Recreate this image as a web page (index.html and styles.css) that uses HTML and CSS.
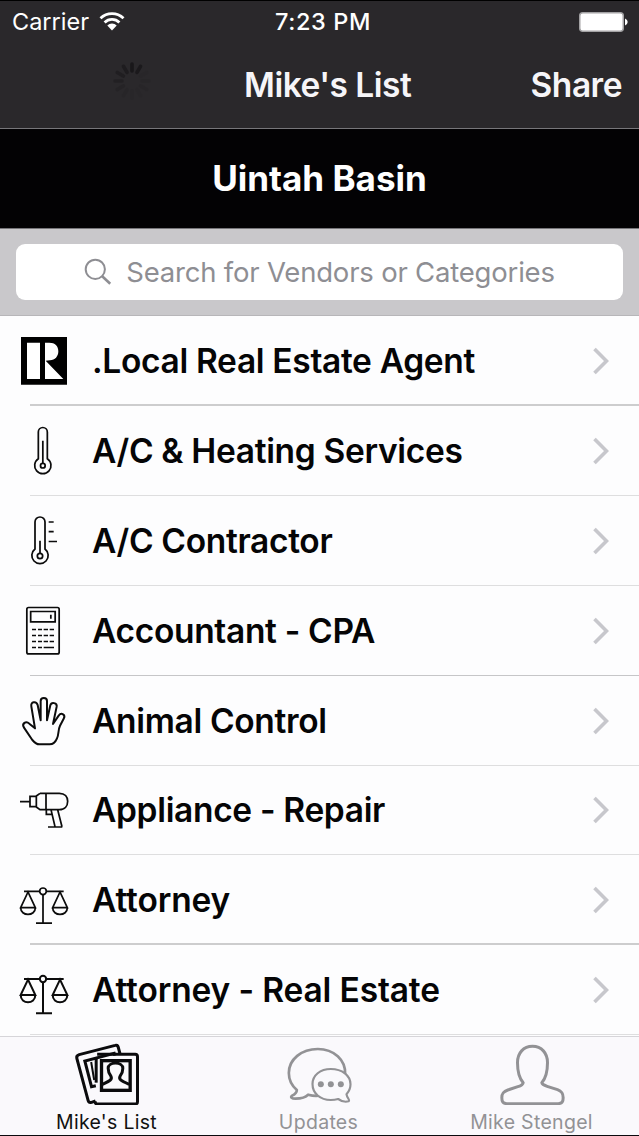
FILE: index.html
```html
<!DOCTYPE html>
<html lang="en">
<head>
    <meta charset="UTF-8">
    <meta name="viewport" content="width=device-width, initial-scale=1.0">
    <title>Mike's List</title>
    <link rel="stylesheet" href="styles.css">
</head>
<body>
    <div class="app">
        <header class="header">
            <div class="status-bar">
                <div class="carrier">
                    <span class="carrier-name">Carrier</span>
                    <svg class="wifi" viewBox="0 0 26 20">
                        <path d="M1.5 7.2a16.5 16.5 0 0 1 23 0M5.6 11.4a10.6 10.6 0 0 1 14.8 0" fill="none" stroke="#fff" stroke-width="2.8"/>
                        <path d="M8.3 14.4a6.8 6.8 0 0 1 9.4 0L13 19.4z" fill="#fff"/>
                    </svg>
                </div>
                <span class="time">7:23 PM</span>
                <svg class="battery" viewBox="0 0 50 20">
                    <rect x=".75" y=".75" width="43.5" height="18.5" rx="3" fill="#fff" stroke="#a3a2a4" stroke-width="1.5"/>
                    <path d="M46 6.5q2.7 1.2 2.7 3.5T46 13.5z" fill="#fff"/>
                </svg>
            </div>
            <nav class="nav-bar">
                <svg class="spinner" viewBox="-20 -20 40 40">
                    <g stroke="#121113" stroke-width="3.6" stroke-linecap="round">
                        <path d="M0-10V-17"/>
                        <path d="M0-10V-17" transform="rotate(30)" opacity=".85"/>
                        <path d="M0-10V-17" transform="rotate(60)" opacity=".08"/>
                        <path d="M0-10V-17" transform="rotate(90)" opacity=".1"/>
                        <path d="M0-10V-17" transform="rotate(120)" opacity=".1"/>
                        <path d="M0-10V-17" transform="rotate(150)" opacity=".07"/>
                        <path d="M0-10V-17" transform="rotate(180)" opacity=".07"/>
                        <path d="M0-10V-17" transform="rotate(210)" opacity=".1"/>
                        <path d="M0-10V-17" transform="rotate(240)" opacity=".25"/>
                        <path d="M0-10V-17" transform="rotate(270)" opacity=".4"/>
                        <path d="M0-10V-17" transform="rotate(300)" opacity=".55"/>
                        <path d="M0-10V-17" transform="rotate(330)" opacity=".7"/>
                    </g>
                </svg>
                <h1 class="title">Mike's List</h1>
                <span class="share">Share</span>
            </nav>
        </header>

        <div class="region">Uintah Basin</div>

        <div class="search">
            <div class="search-field">
                <svg class="search-icon" viewBox="0 0 28 28">
                    <g fill="none" stroke="#8e8e93" stroke-width="2">
                        <circle cx="11.3" cy="11.3" r="9.6"/>
                        <path d="M18.2 18.2l8 7.6" stroke-width="2.6"/>
                    </g>
                </svg>
                <span class="placeholder">Search for Vendors or Categories</span>
            </div>
        </div>

        <ul class="list">
            <li class="row strong">
                <svg class="icon" viewBox="48 39 168 168">
                    <path d="M63 51H201V194H63z" fill="#000" stroke="none"/>
                    <path d="M81 68H120V177H81zM135 68H148C165 68 175 78 175 94S165 120 150 121L137 122 190 177H135z" fill="#fff" stroke="none"/>
                </svg>
                <span class="name">.Local Real Estate Agent</span>
                <svg class="chevron" viewBox="0 0 16 28"><path d="M1.5 2L13.5 14 1.5 26"/></svg>
            </li>
            <li class="row">
                <svg class="icon" viewBox="48 309 168 168">
                    <path d="M115 416V336a13.500 13.500 0 0 1 27 0V416a24.500 24.500 0 1 1-27 0zM128.500 362V431"/>
                    <circle cx="128.500" cy="437" r="7"/>
                </svg>
                <span class="name">A/C &amp; Heating Services</span>
                <svg class="chevron" viewBox="0 0 16 28"><path d="M1.5 2L13.5 14 1.5 26"/></svg>
            </li>
            <li class="row">
                <svg class="icon" viewBox="48 39 168 168">
                    <path d="M105 147V66a15 15 0 0 1 30 0V147a24.500 24.500 0 1 1-30 0zM120 122V160M146 66H161M146 95H161M146 124.500H171"/>
                    <circle cx="120" cy="168" r="8"/>
                </svg>
                <span class="name">A/C Contractor</span>
                <svg class="chevron" viewBox="0 0 16 28"><path d="M1.5 2L13.5 14 1.5 26"/></svg>
            </li>
            <li class="row mid">
                <svg class="icon" viewBox="48 309 168 168">
                    <rect x="80.500" y="322.500" width="97" height="139" rx="5"/>
                    <path d="M92 334.500H165.500V365.500H92zM152.500 344V356"/>
                    <path d="M96 388.500h12m6 0h12m5 0h13m5 0h13M96 406.500h12m6 0h12m5 0h13m5 0h13M96 424.500h12m6 0h12m5 0h13m5 0h13M96 442.500h12m6 0h12m5 0h31"/>
                </svg>
                <span class="name">Accountant - CPA</span>
                <svg class="chevron" viewBox="0 0 16 28"><path d="M1.5 2L13.5 14 1.5 26"/></svg>
            </li>
            <li class="row">
                <svg class="icon hand" viewBox="48 36 168 168">
                    <path d="M105 142L94 76C91 62 109 59 113 72L122 118V60C122 48 141 48 141 60V118L151 73C154 62 172 65 170 77L159 129 176 104C184 93 198 101 191 113L180 134C174 146 177 160 171 172C166 184 160 190 149 190H118C109 190 103 184 97 177L72 140C64 128 78 118 88 128z"/>
                </svg>
                <span class="name">Animal Control</span>
                <svg class="chevron" viewBox="0 0 16 28"><path d="M1.5 2L13.5 14 1.5 26"/></svg>
            </li>
            <li class="row">
                <svg class="icon" viewBox="48 306 168 168">
                    <path d="M60 365H90M109 349H90V380H109M120 340H178C195 340 203 351 203 364S195 389 178 389H120L109 381V348L120 340M138 340V389M139 389V403H157M153 389L165 440M173 389L186 440M144 441H187"/>
                </svg>
                <span class="name">Appliance - Repair</span>
                <svg class="chevron" viewBox="0 0 16 28"><path d="M1.5 2L13.5 14 1.5 26"/></svg>
            </li>
            <li class="row strong">
                <svg class="icon" viewBox="48 36 168 168">
                    <path d="M72 94H118M139 94H191M129 104V189M108 189.500H156M84 96L62 143H106zM62 143C62 170 106 170 106 143M180 96L158 143H202zM158 143C158 170 202 170 202 143"/>
                    <circle cx="129" cy="94" r="10"/>
                </svg>
                <span class="name wide">Attorney</span>
                <svg class="chevron" viewBox="0 0 16 28"><path d="M1.5 2L13.5 14 1.5 26"/></svg>
            </li>
            <li class="row">
                <svg class="icon bold" viewBox="48 306 168 168">
                    <path d="M72 357H118M139 357H191M129 367V459M108 459.500H156M84 359L62 405H106zM62 405C62 434 106 434 106 405M180 359L158 405H202zM158 405C158 434 202 434 202 405"/>
                    <circle cx="129" cy="357" r="9.500"/>
                </svg>
                <span class="name wide">Attorney - Real Estate</span>
                <svg class="chevron" viewBox="0 0 16 28"><path d="M1.5 2L13.5 14 1.5 26"/></svg>
            </li>
        </ul>

        <footer class="tab-bar">
            <div class="tab active">
                <svg class="tab-icon" viewBox="214.500 30 210 195">
                    <g fill="none" stroke="#0b0b0d" stroke-width="9" stroke-linejoin="round">
                        <path d="M359 73L353 51Q351 44 344 46L236 74Q227 77 229 85L263 212Q265 219 273 217L285 213"/>
                        <path d="M343 77L341 70 253 93 273 170 286 167" stroke-linejoin="miter"/>
                        <path d="M272 96L281 150" stroke-width="6"/>
                        <path d="M290 73H404Q411 73 411 80V215Q411 222 404 222H290Q284 222 284 214"/>
                        <path d="M287 84V158"/>
                    </g>
                    <path d="M298 87H394V186H298z" fill="#0b0b0d"/>
                    <path d="M308 97H384V176H308z" fill="#faf9fc"/>
                    <path d="M306 163C327 153 337 149 331 138C326 132 323 124 323 115C323 94 367 94 367 115C367 124 364 132 359 138C353 149 363 153 386 163" fill="#faf9fc" stroke="#0b0b0d" stroke-width="9"/>
                </svg>
                <span class="tab-label">Mike's List</span>
            </div>
            <div class="tab">
                <svg class="tab-icon" viewBox="214.500 30 210 195">
                    <g fill="#faf9fc" stroke="#929295" stroke-width="8" stroke-linejoin="round">
                        <path d="M395 133C397 90 361 57 313 57C264 57 226 88 226 129C226 151 235 167 250 180C250 190 242 194 236 197C229 202 235 206 246 206C262 206 276 203 284 194C299 198 312 199 325 195"/>
                        <path d="M352 117C320 117 297 136 297 162C297 190 320 210 352 210C361 210 367 209 374 207C384 214 398 216 405 214C411 210 401 205 399 193C407 184 411 175 411 163C411 137 386 117 352 117z" stroke-width="6.500"/>
                    </g>
                    <g fill="#929295">
                        <circle cx="322" cy="163" r="9"/>
                        <circle cx="352" cy="163" r="9"/>
                        <circle cx="382" cy="163" r="9"/>
                    </g>
                </svg>
                <span class="tab-label">Updates</span>
            </div>
            <div class="tab">
                <svg class="tab-icon" viewBox="214.500 30 210 195">
                    <path d="M318 49C291 49 273 69 273 98C273 122 279 145 290 158C289 164 283 167 274 170L244 180C230 185 226 191 226 203C226 216 230 221 241 221H395C406 221 410 216 410 203C410 190 406 184 393 179L362 169C353 166 347 163 346 158C357 145 363 122 363 98C363 69 345 49 318 49z" fill="none" stroke="#929295" stroke-width="9" stroke-linejoin="round"/>
                </svg>
                <span class="tab-label">Mike Stengel</span>
            </div>
        </footer>
    </div>
</body>
</html>
```
FILE: styles.css
```css
* {
    box-sizing: border-box;
}
body {
    margin: 0;
    font-family: Inter, "Liberation Sans", sans-serif;
    background: #fdfdfe;
}
.app {
    display: flex;
    flex-direction: column;
    height: 1136px;
    overflow: hidden;
    border-bottom: 1px solid #0b0a0e;
}
.header {
    height: 129px;
    flex: none;
    background: #2a282b;
    color: #fff;
    border-top: 1px solid #000;
    border-bottom: 1px solid #77767a;
}
.status-bar {
    display: grid;
    grid-template-columns: 1fr auto 1fr;
    align-items: center;
    height: 41px;
    padding: 0 10px 0 12px;
}
.carrier {
    display: flex;
    align-items: center;
    gap: 10px;
}
.carrier-name {
    font-size: 23.5px;
}
.wifi {
    width: 26px;
    height: 20px;
    margin-top: -2px;
}
.time {
    font-size: 23.5px;
    font-weight: 500;
    letter-spacing: 0.6px;
    padding-left: 5px;
}
.battery {
    width: 50px;
    height: 20px;
    justify-self: end;
}
.nav-bar {
    display: flex;
    align-items: center;
    height: 86px;
    padding: 0 17px 0 112px;
}
.spinner {
    width: 40px;
    height: 40px;
    margin-top: -9px;
    opacity: 0.7;
}
.title,
.share {
    margin: 0;
    font-size: 33.5px;
    font-weight: 600;
    letter-spacing: -0.5px;
    color: #f6f5f8;
}
.title {
    margin-left: 92px;
}
.share {
    margin-left: auto;
}
.region {
    height: 99px;
    flex: none;
    background: #030204;
    color: #fff;
    font-size: 35px;
    font-weight: 700;
    line-height: 99px;
    text-align: center;
}
.search {
    height: 88px;
    flex: none;
    padding: 15px 16px;
    background: #c9c8cb;
    border-top: 1px solid #77767a;
    border-bottom: 1px solid #b7b6b9;
}
.search-field {
    display: flex;
    align-items: center;
    justify-content: center;
    gap: 14px;
    height: 56px;
    border-radius: 9px;
    background: #fff;
    color: #8e8e93;
    font-size: 27.5px;
    letter-spacing: -0.2px;
}
.search-icon {
    width: 28px;
    height: 28px;
}
.list {
    flex: 1;
    min-height: 0;
    margin: 0;
    padding: 0.6px 0 0;
    list-style: none;
    overflow: hidden;
}
.row {
    display: flex;
    align-items: center;
    height: 89.8px;
    padding: 0 30px 0 16px;
    background: linear-gradient(#dededf, #dededf) 30px 100% / 100% 1px no-repeat;
}
.row.mid {
    background-image: linear-gradient(#c6c6c8, #c6c6c8);
}
.row.strong {
    background-image: linear-gradient(#cdcdce, #cdcdce);
    background-size: 100% 2px;
}
.icon {
    width: 56px;
    height: 56px;
    flex: none;
    margin-right: 20px;
    fill: none;
    stroke: #0c0c0c;
    stroke-width: 5.2;
}
.icon.hand {
    stroke-width: 6;
    stroke-linejoin: round;
}
.icon.bold {
    stroke-width: 6;
}
.name {
    font-size: 33.5px;
    font-weight: 600;
    letter-spacing: -0.33px;
    color: #050506;
    white-space: nowrap;
}
.name.wide {
    letter-spacing: -0.14px;
}
.chevron {
    width: 16px;
    height: 28px;
    margin-left: auto;
    fill: none;
    stroke: #c7c7cc;
    stroke-width: 3.6;
}
.tab-bar {
    display: grid;
    grid-template-columns: repeat(3, 1fr);
    height: 99px;
    flex: none;
    background: #faf9fc;
    border-top: 1px solid #d6d5d9;
}
.tab {
    display: flex;
    flex-direction: column;
    align-items: center;
    padding-top: 3px;
    color: #929295;
}
.tab.active {
    color: #111;
}
.tab-icon {
    width: 70px;
    height: 65px;
}
.tab-label {
    margin-top: 5px;
    font-size: 19.5px;
    line-height: 24px;
    letter-spacing: 0.3px;
    white-space: nowrap;
}
.tab:not(.active) .tab-label {
    padding-right: 2px;
}
```
